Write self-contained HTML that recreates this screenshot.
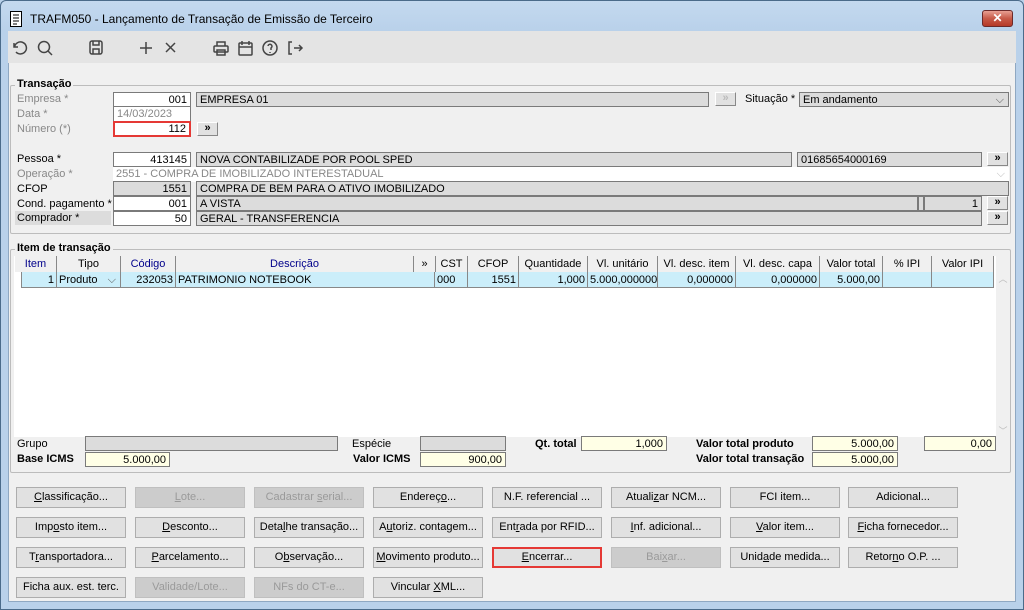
<!DOCTYPE html><html><head><meta charset="utf-8"><style>
*{box-sizing:border-box;margin:0;padding:0}
body{width:1024px;height:610px;background:#b9d1ea;font-family:"Liberation Sans",Arial,sans-serif;font-size:11px;color:#000;position:relative;overflow:hidden}
.a{position:absolute}
#win{left:0;top:0;width:1024px;height:610px;border:1px solid #4b6b8a;border-radius:6px 6px 0 0;background:linear-gradient(#c4d9ef,#b9d1ea 30px)}
#cont{left:8px;top:31px;width:1008px;height:571px;background:#f0f0f0;border:1px solid #8fa8c2}
#tb{left:8px;top:31px;width:1008px;height:32px;background:#e4e4e4}
.l{position:absolute;font-size:11px;line-height:14px;white-space:nowrap}
.g{color:#888}
.f{position:absolute;height:15px;border:1px solid #7a7a7a;background:#dcdcdc;font-size:11px;line-height:14px;padding:0 3px;white-space:nowrap;overflow:hidden}
.w{background:#fff}.y{background:#ffffe6}.r{text-align:right}
.bt{position:absolute;width:21px;height:14px;border:1px solid #888;border-top-color:#fff;border-left-color:#fff;background:#e1e1e1;font-size:11px;line-height:11px;text-align:center;font-weight:bold}
.grp{position:absolute;border:1px solid #bcbcbc;border-radius:2px}
.gt{position:absolute;font-weight:bold;font-size:11px;background:#f0f0f0;padding:0 2px;line-height:13px}
.b{position:absolute;width:110px;height:21px;border:1px solid #adadad;background:#e1e1e1;text-align:center;font-size:11px;line-height:19px;white-space:nowrap}
.d{background:#cccccc;color:#9a9a9a;border-color:#bfbfbf}
.h,.c{position:absolute;height:16px;font-size:11px;line-height:16px;white-space:nowrap;overflow:hidden;padding:0 2px}
.h{top:256px;border-right:1px solid #888;background:#f0f0f0;text-align:center}
.c{top:272px;background:#cbeefa;border-right:1px solid #888;border-bottom:1px solid #888}
.bl{color:#00008b}
u{text-decoration:underline}
</style></head><body>
<div id="win" class="a"></div>
<svg class="a" style="left:9px;top:11px" width="14" height="16" viewBox="0 0 14 16"><rect x="1.5" y="0.5" width="11" height="15" fill="#fff" stroke="#000"/><path d="M4 4h6M4 7h6M4 10h6M4 13h4" stroke="#000"/></svg>
<div class="l" style="left:30px;top:12px;font-size:12px;line-height:15px">TRAFM050 - Lançamento de Transação de Emissão de Terceiro</div>
<div class="a" style="left:982px;top:10px;width:31px;height:17px;border:1px solid #6b2a2a;border-radius:3px;background:linear-gradient(#e8a093,#c75a48 50%,#b53a28);color:#fff;font-weight:bold;text-align:center;font-size:12px;line-height:15px">✕</div>
<div id="cont" class="a"></div>
<div id="tb" class="a"></div>
<svg class="a" style="left:10px;top:38px" width="300" height="20" viewBox="0 0 300 20" fill="none" stroke="#444" stroke-width="1.5">
<path d="M4 5v4h4M4.5 9A6 6 0 1 1 6 14"/>
<circle cx="34" cy="9" r="5.5"/><path d="M38 13l4 4"/>
<rect x="80" y="3" width="12" height="13" rx="2"/><path d="M83 3v4h6V3M83 16v-5h6v5"/>
<path d="M136 4v12M130 10h12M156 5l9 9M165 5l-9 9"/>
<rect x="204" y="8" width="14" height="6" rx="1"/><path d="M207 8V4h8v4M207 12h8v5h-8z"/>
<rect x="229" y="5" width="13" height="12" rx="1"/><path d="M229 9h13M232 3v4M239 3v4"/>
<circle cx="260" cy="10" r="7"/><path d="M258 8a2 2 0 1 1 3 2v2M260 14v1"/>
<path d="M282 4h-3v12h3M284 10h8M289 7l3 3-3 3"/>
</svg>
<div class="grp" style="left:10px;top:85px;width:1001px;height:149px"></div>
<div class="gt" style="left:15px;top:78px">Transação</div>
<div class="l g" style="left:17px;top:92px">Empresa *</div>
<div class="f w r" style="left:113px;top:92px;width:78px">001</div>
<div class="f" style="left:196px;top:92px;width:513px">EMPRESA 01</div>
<div class="bt" style="left:715px;top:92px;color:#bbb">»</div>
<div class="l" style="left:745px;top:92px">Situação *</div>
<div class="f" style="left:799px;top:92px;width:210px">Em andamento<span style="position:absolute;right:4px;color:#555">⌵</span></div>
<div class="l g" style="left:17px;top:107px">Data *</div>
<div class="f w g" style="left:113px;top:106px;width:78px;border-bottom:none">14/03/2023</div>
<div class="l g" style="left:17px;top:122px">Número (*)</div>
<div class="f w r" style="left:113px;top:121px;width:78px;border:2px solid #e53935;height:16px;line-height:13px">112</div>
<div class="bt" style="left:197px;top:122px">»</div>
<div class="l" style="left:17px;top:152px">Pessoa *</div>
<div class="f w r" style="left:113px;top:152px;width:78px">413145</div>
<div class="f" style="left:196px;top:152px;width:596px">NOVA CONTABILIZADE POR POOL SPED</div>
<div class="f" style="left:797px;top:152px;width:185px">01685654000169</div>
<div class="bt" style="left:987px;top:152px">»</div>
<div class="l g" style="left:17px;top:167px">Operação *</div>
<div class="f w g" style="left:113px;top:167px;width:896px;border:none">2551 - COMPRA DE IMOBILIZADO INTERESTADUAL<span style="position:absolute;right:4px;color:#bbb">⌵</span></div>
<div class="l" style="left:17px;top:182px">CFOP</div>
<div class="f r" style="left:113px;top:181px;width:78px">1551</div>
<div class="f" style="left:196px;top:181px;width:813px">COMPRA DE BEM PARA O ATIVO IMOBILIZADO</div>
<div class="l" style="left:17px;top:197px">Cond. pagamento *</div>
<div class="f w r" style="left:113px;top:196px;width:78px">001</div>
<div class="f" style="left:196px;top:196px;width:722px">A VISTA</div>
<div class="f" style="left:918px;top:196px;width:6px;padding:0"></div>
<div class="f r" style="left:924px;top:196px;width:58px">1</div>
<div class="bt" style="left:987px;top:196px">»</div>
<div class="l" style="left:15px;top:211px;width:96px;background:#dcdcdc;padding-left:2px">Comprador *</div>
<div class="f w r" style="left:113px;top:211px;width:78px">50</div>
<div class="f" style="left:196px;top:211px;width:786px">GERAL - TRANSFERENCIA</div>
<div class="bt" style="left:987px;top:211px">»</div>
<div class="grp" style="left:10px;top:249px;width:1001px;height:224px"></div>
<div class="gt" style="left:15px;top:242px">Item de transação</div>
<div class="a" style="left:14px;top:256px;width:982px;height:181px;background:#fff"></div>
<div class="a" style="left:996px;top:272px;width:14px;height:165px;background:#f0f0f0;color:#bbb;font-size:9px;text-align:center">︿<div style="position:absolute;bottom:0;width:14px">﹀</div></div>
<div class="h bl" style="left:15px;width:42px">Item</div>
<div class="h" style="left:57px;width:64px">Tipo</div>
<div class="h bl" style="left:121px;width:55px">Código</div>
<div class="h bl" style="left:176px;width:238px">Descrição</div>
<div class="h" style="left:414px;width:22px">»</div>
<div class="h" style="left:436px;width:32px">CST</div>
<div class="h" style="left:468px;width:51px">CFOP</div>
<div class="h" style="left:519px;width:69px">Quantidade</div>
<div class="h" style="left:588px;width:70px">Vl. unitário</div>
<div class="h" style="left:658px;width:78px">Vl. desc. item</div>
<div class="h" style="left:736px;width:84px">Vl. desc. capa</div>
<div class="h" style="left:820px;width:63px">Valor total</div>
<div class="h" style="left:883px;width:49px">% IPI</div>
<div class="h" style="left:932px;width:62px">Valor IPI</div>
<div class="c r" style="left:21px;width:36px;border-left:1px solid #888">1</div>
<div class="c" style="left:57px;width:64px">Produto<span style="position:absolute;right:4px;color:#555">⌵</span></div>
<div class="c r" style="left:121px;width:55px">232053</div>
<div class="c" style="left:176px;width:259px">PATRIMONIO NOTEBOOK</div>
<div class="c" style="left:435px;width:33px">000</div>
<div class="c r" style="left:468px;width:51px">1551</div>
<div class="c r" style="left:519px;width:69px">1,000</div>
<div class="c r" style="left:588px;width:70px">5.000,000000</div>
<div class="c r" style="left:658px;width:78px">0,000000</div>
<div class="c r" style="left:736px;width:84px">0,000000</div>
<div class="c r" style="left:820px;width:63px">5.000,00</div>
<div class="c" style="left:883px;width:49px"></div>
<div class="c" style="left:932px;width:62px"></div>
<div class="l" style="left:17px;top:437px">Grupo</div>
<div class="f" style="left:85px;top:436px;width:253px"></div>
<div class="l" style="left:352px;top:437px">Espécie</div>
<div class="f" style="left:420px;top:436px;width:86px"></div>
<div class="l" style="left:17px;top:452px;font-weight:bold">Base ICMS</div>
<div class="f y r" style="left:85px;top:452px;width:85px">5.000,00</div>
<div class="l" style="left:353px;top:452px;font-weight:bold">Valor ICMS</div>
<div class="f y r" style="left:420px;top:452px;width:86px">900,00</div>
<div class="l" style="left:535px;top:437px;font-weight:bold">Qt. total</div>
<div class="f y r" style="left:581px;top:436px;width:86px">1,000</div>
<div class="l" style="left:696px;top:437px;font-weight:bold">Valor total produto</div>
<div class="f y r" style="left:812px;top:436px;width:86px">5.000,00</div>
<div class="f y r" style="left:924px;top:436px;width:72px">0,00</div>
<div class="l" style="left:696px;top:452px;font-weight:bold">Valor total transação</div>
<div class="f y r" style="left:812px;top:452px;width:86px">5.000,00</div>
<div class="b" style="left:16px;top:487px"><u>C</u>lassificação...</div>
<div class="b d" style="left:135px;top:487px"><u>L</u>ote...</div>
<div class="b d" style="left:254px;top:487px">Cadastrar <u>s</u>erial...</div>
<div class="b" style="left:373px;top:487px">Endereç<u>o</u>...</div>
<div class="b" style="left:492px;top:487px">N.F. referencial ...</div>
<div class="b" style="left:611px;top:487px">Atuali<u>z</u>ar NCM...</div>
<div class="b" style="left:730px;top:487px">FCI item...</div>
<div class="b" style="left:848px;top:487px">Adicional...</div>
<div class="b" style="left:16px;top:517px">Imp<u>o</u>sto item...</div>
<div class="b" style="left:135px;top:517px"><u>D</u>esconto...</div>
<div class="b" style="left:254px;top:517px">Deta<u>l</u>he transação...</div>
<div class="b" style="left:373px;top:517px">A<u>u</u>toriz. contagem...</div>
<div class="b" style="left:492px;top:517px">Ent<u>r</u>ada por RFID...</div>
<div class="b" style="left:611px;top:517px"><u>I</u>nf. adicional...</div>
<div class="b" style="left:730px;top:517px"><u>V</u>alor item...</div>
<div class="b" style="left:848px;top:517px"><u>F</u>icha fornecedor...</div>
<div class="b" style="left:16px;top:547px">T<u>r</u>ansportadora...</div>
<div class="b" style="left:135px;top:547px"><u>P</u>arcelamento...</div>
<div class="b" style="left:254px;top:547px">O<u>b</u>servação...</div>
<div class="b" style="left:373px;top:547px"><u>M</u>ovimento produto...</div>
<div class="b" style="left:492px;top:547px;border:2px solid #e53935;line-height:17px"><u>E</u>ncerrar...</div>
<div class="b d" style="left:611px;top:547px">Bai<u>x</u>ar...</div>
<div class="b" style="left:730px;top:547px">Unid<u>a</u>de medida...</div>
<div class="b" style="left:848px;top:547px">Retor<u>n</u>o O.P. ...</div>
<div class="b" style="left:16px;top:577px">Ficha aux. est. terc.</div>
<div class="b d" style="left:135px;top:577px">Validade/Lote...</div>
<div class="b d" style="left:254px;top:577px">NFs do CT-e...</div>
<div class="b" style="left:373px;top:577px">Vincular <u>X</u>ML...</div>
</body></html>
